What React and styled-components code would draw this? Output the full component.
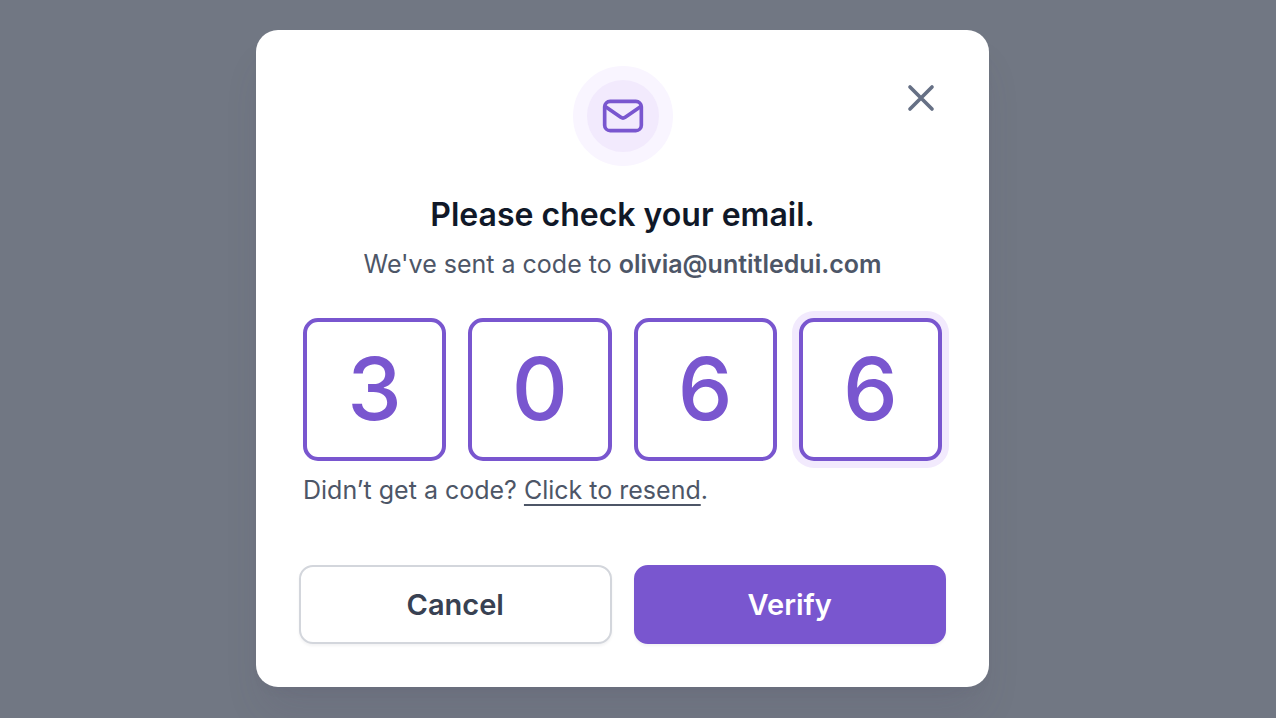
import React, { useState } from "react";
import styled, { createGlobalStyle, css } from "styled-components";

const GlobalStyle = createGlobalStyle`
  *, *::before, *::after { box-sizing: border-box; }
  body {
    margin: 0;
    background: #717783;
    font-family: Inter, "Liberation Sans", sans-serif;
    -webkit-font-smoothing: antialiased;
  }
`;

const Overlay = styled.main`
  display: flex;
  justify-content: center;
  align-items: flex-start;
  min-height: 100vh;
  padding: 30px 31px 30px 0;
`;

const Dialog = styled.section`
  position: relative;
  display: flex;
  flex-direction: column;
  width: 100%;
  max-width: 733px;
  padding: 36px 43px 43px;
  border-radius: 22px;
  background: #fff;
  box-shadow: 0 30px 40px -8px rgba(78, 64, 96, 0.12), 0 8px 14px -8px rgba(78, 64, 96, 0.08);
`;

const CloseButton = styled.button`
  position: absolute;
  top: 46px;
  right: 46px;
  display: flex;
  padding: 0;
  border: 0;
  background: none;
  color: #667085;
  cursor: pointer;
`;

const Icon = styled.svg.attrs({
  width: 44,
  height: 44,
  viewBox: "0 0 24 24",
  fill: "none",
  stroke: "currentColor",
  strokeWidth: 2,
  strokeLinecap: "round",
  strokeLinejoin: "round",
  "aria-hidden": true,
})`
  display: block;
`;

const FeaturedIcon = styled.div`
  display: grid;
  place-items: center;
  align-self: center;
  width: 100px;
  height: 100px;
  border: 14px solid #f9f5ff;
  border-radius: 50%;
  background: #f2eafd;
  color: #7956cf;
`;

const Heading = styled.h1`
  margin: 29px 0 0;
  color: #101828;
  font-size: 32px;
  font-weight: 600;
  line-height: 40px;
  text-align: center;
`;

const Text = styled.p`
  margin: 0;
  color: #4d5667;
  font-size: 25px;
  line-height: 36px;
`;

const Message = styled(Text)`
  margin-top: 11px;
  text-align: center;
`;

const Email = styled.strong`
  font-weight: 600;
`;

const CodeRow = styled.div`
  display: grid;
  grid-template-columns: repeat(4, 1fr);
  gap: 22px;
  margin: 36px 4px 0;
`;

const Digit = styled.input`
  width: 100%;
  min-width: 0;
  height: 143px;
  padding: 0 0 2px;
  border: 4px solid #7956cf;
  border-radius: 15px;
  outline: 0;
  background: #fff;
  color: #7956cf;
  font: 500 87px/104px Inter, "Liberation Sans", sans-serif;
  text-align: center;
  ${(p) => p.$active && css`box-shadow: 0 0 0 7px #f2eafd;`}
`;

const Hint = styled(Text)`
  margin: 11px 4px 0;
`;

const ResendLink = styled.a`
  color: inherit;
  text-decoration: underline;
  text-decoration-thickness: 2px;
  text-underline-offset: 5px;
  text-decoration-skip-ink: none;
`;

const Actions = styled.div`
  display: grid;
  grid-template-columns: 1fr 1fr;
  gap: 22px;
  margin-top: 57px;
`;

const Button = styled.button`
  height: 79px;
  padding: 0 32px;
  border: 2px solid ${(p) => (p.$primary ? "#7956cf" : "#d3d6dc")};
  border-radius: 14px;
  background: ${(p) => (p.$primary ? "#7956cf" : "#fff")};
  box-shadow: 0 2px 3px rgba(16, 24, 40, 0.05);
  color: ${(p) => (p.$primary ? "#fff" : "#384152")};
  font: 600 29px/44px Inter, "Liberation Sans", sans-serif;
  cursor: pointer;
`;

export default function App() {
  const [code, setCode] = useState(["3", "0", "6", "6"]);
  const setDigit = (index, value) =>
    setCode(code.map((digit, i) => (i === index ? value : digit)));

  return (
    <>
      <GlobalStyle />
      <Overlay>
        <Dialog role="dialog" aria-modal="true" aria-labelledby="dialog-title">
          <CloseButton type="button" aria-label="Close">
            <Icon>
              <path d="M18 6 6 18M6 6l12 12" />
            </Icon>
          </CloseButton>
          <FeaturedIcon>
            <Icon>
              <rect x="2" y="4" width="20" height="16" rx="3" />
              <path d="m2.300 6.800 8.500 5.900q1.200.8 2.400 0l8.500-5.900" />
            </Icon>
          </FeaturedIcon>
          <Heading id="dialog-title">Please check your email.</Heading>
          <Message>
            We've sent a code to <Email>olivia@untitledui.com</Email>
          </Message>
          <CodeRow role="group" aria-label="Verification code">
            {code.map((digit, i) => (
              <Digit
                key={i}
                $active={i === code.length - 1}
                aria-label={`Digit ${i + 1}`}
                inputMode="numeric"
                maxLength={1}
                value={digit}
                onChange={(e) => setDigit(i, e.target.value)}
              />
            ))}
          </CodeRow>
          <Hint>
            Didn’t get a code? <ResendLink href="#resend">Click to resend</ResendLink>.
          </Hint>
          <Actions>
            <Button type="button">Cancel</Button>
            <Button type="button" $primary>Verify</Button>
          </Actions>
        </Dialog>
      </Overlay>
    </>
  );
}
